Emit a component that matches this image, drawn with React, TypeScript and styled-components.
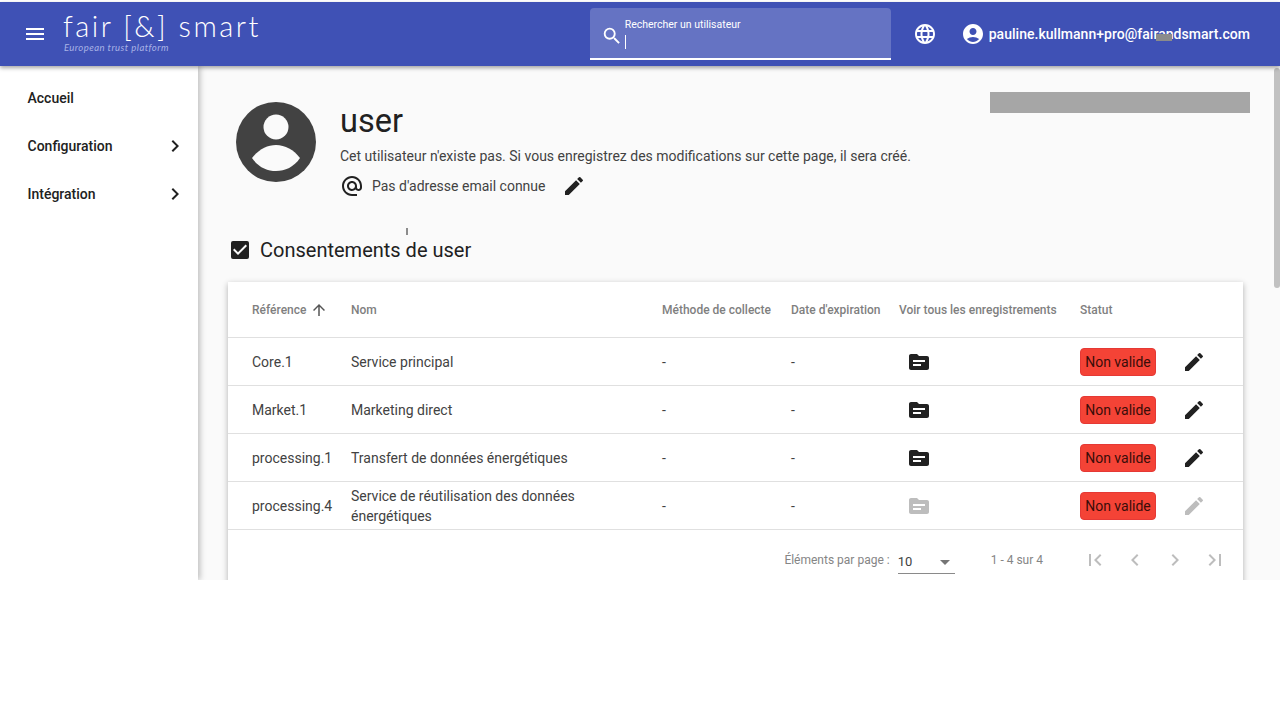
import { FC } from 'react'
import styled, { createGlobalStyle } from 'styled-components'
import {
  MdAccountCircle,
  MdAlternateEmail,
  MdArrowDropDown,
  MdArrowUpward,
  MdCheckBox,
  MdChevronLeft,
  MdChevronRight,
  MdEdit,
  MdFirstPage,
  MdLanguage,
  MdLastPage,
  MdMenu,
  MdSearch,
  MdTopic,
} from 'react-icons/md'

const GlobalStyle = createGlobalStyle`
  html, body {
    margin: 0;
    background: #fff;
    font-family: Roboto, "Liberation Sans", sans-serif;
  }
`

const Page = styled.div`
  position: relative;
  display: flex;
  flex-direction: column;
  height: 578px;
  padding-top: 2px;
  overflow: hidden;
`

const Header = styled.header`
  position: relative;
  z-index: 2;
  flex: none;
  display: flex;
  align-items: center;
  height: 64px;
  padding: 0 30px 0 23px;
  background: #3f51b5;
  color: #fff;
  box-shadow: 0 2px 4px rgba(0, 0, 0, 0.35);
`

const Logo = styled.div`
  display: flex;
  flex-direction: column;
  margin: 0 0 4px 16px;
`

const LogoName = styled.span`
  font-family: Lato, sans-serif;
  font-weight: 300;
  font-size: 29px;
  line-height: 30px;
  letter-spacing: 2.5px;
  white-space: nowrap;
`

const LogoTagline = styled.span`
  font-family: Lato, sans-serif;
  font-style: italic;
  font-size: 9.5px;
  line-height: 12px;
  letter-spacing: 0.45px;
  margin: 1px 0 0 1px;
  color: #a9b3e6;
`

const Search = styled.div`
  display: flex;
  box-sizing: border-box;
  width: 301px;
  height: 52px;
  margin-left: auto;
  margin-right: 22px;
  padding: 0 12px 0 11px;
  background: #6573c3;
  border-bottom: 2px solid #fff;
  border-radius: 4px 4px 0 0;
`

const SearchIcon = styled(MdSearch)`
  flex: none;
  margin: 17px 2px 0 0;
  font-size: 22px;
`

const SearchField = styled.div`
  display: flex;
  flex-direction: column;
  align-items: flex-start;
`

const SearchLabel = styled.span`
  margin-top: 10px;
  font-size: 10.5px;
  line-height: 13px;
  white-space: nowrap;
`

const Caret = styled.span`
  width: 1px;
  height: 14px;
  margin-top: 4px;
  background: #fff;
`

const AccountIcon = styled(MdAccountCircle)`
  flex: none;
  margin-left: 24px;
  font-size: 24px;
`

const UserEmail = styled.span`
  position: relative;
  margin-left: 4px;
  font-size: 14px;
  font-weight: 500;
  letter-spacing: 0.03px;
  white-space: nowrap;
`

const EmailSmudge = styled.span`
  position: absolute;
  left: 167px;
  top: 8px;
  width: 16px;
  height: 7px;
  background: #8b8b8b;
`

const Body = styled.div`
  flex: 1;
  display: flex;
  min-height: 0;
`

const Sidebar = styled.nav`
  position: relative;
  z-index: 1;
  flex: none;
  box-sizing: border-box;
  width: 198px;
  padding: 8px 0 0 27.5px;
  background: #fff;
  box-shadow: 2px 0 6px rgba(0, 0, 0, 0.25);
`

const NavItem = styled.div`
  display: flex;
  align-items: center;
  justify-content: space-between;
  height: 48px;
  padding-right: 11.5px;
  font-size: 14px;
  font-weight: 500;
  color: #212121;
`

const Main = styled.main`
  position: relative;
  flex: 1;
  box-sizing: border-box;
  padding: 36px 37px 0 30px;
  background: #fafafa;
`

const ScrollThumb = styled.div`
  position: absolute;
  right: 0;
  top: 2px;
  width: 6px;
  height: 220px;
  border-radius: 3px;
  background: #c1c1c1;
`

const RedactedBar = styled.div`
  position: absolute;
  right: 30px;
  top: 26px;
  width: 260px;
  height: 21px;
  background: #a6a6a6;
`

const StrayTick = styled.div`
  position: absolute;
  left: 208px;
  top: 162px;
  width: 2px;
  height: 7px;
  background: #8c8c8c;
`

const Profile = styled.section`
  display: flex;
  align-items: flex-start;
  gap: 24px;
  padding-left: 8px;
`

const Avatar = styled.svg`
  flex: none;
  width: 80px;
  height: 80px;
`

const ProfileInfo = styled.div`
  display: flex;
  flex-direction: column;
`

const UserName = styled.h1`
  margin: 1px 0 0;
  font-size: 32.5px;
  font-weight: 400;
  line-height: 36px;
  color: #212121;
`

const Notice = styled.p`
  margin: 7px 0 0;
  font-size: 14px;
  line-height: 20px;
  color: #424242;
`

const EmailRow = styled.div`
  display: flex;
  align-items: center;
  height: 24px;
  margin-top: 8px;
  font-size: 14px;
  color: #424242;
`

const AtIcon = styled(MdAlternateEmail)`
  font-size: 24px;
  margin-right: 8px;
  color: #212121;
`

const EmailEditIcon = styled(MdEdit)`
  font-size: 24px;
  margin-left: 17px;
  color: #212121;
`

const SectionTitle = styled.h2`
  display: flex;
  align-items: center;
  gap: 8px;
  height: 24px;
  margin: 40px 0 0;
  font-size: 20px;
  font-weight: 400;
  color: #212121;
`

const Card = styled.section`
  margin-top: 20px;
  background: #fff;
  box-shadow: 0 2px 6px rgba(0, 0, 0, 0.3);
`

const Table = styled.table`
  width: 100%;
  table-layout: fixed;
  border-collapse: collapse;
`

const HeadCell = styled.th<{ $width?: number }>`
  ${({ $width }) => $width && `width: ${$width}px;`}
  box-sizing: border-box;
  height: 55px;
  padding: 1px 0 0;
  text-align: left;
  font-size: 12px;
  font-weight: 500;
  color: #7f7f7f;
  white-space: nowrap;
  border-bottom: 1px solid #e0e0e0;
  &:first-child {
    padding-left: 24px;
  }
`

const SortIcon = styled(MdArrowUpward)`
  margin-left: 4px;
  font-size: 18px;
  vertical-align: -5px;
  color: #555;
`

const Row = styled.tr`
  height: 48px;
`

const Cell = styled.td`
  box-sizing: border-box;
  padding: 2px 0 0;
  font-size: 14px;
  line-height: 20px;
  color: #424242;
  border-bottom: 1px solid #e0e0e0;
  &:first-child {
    padding-left: 24px;
  }
`

const NameCell = styled(Cell)`
  padding-right: 30px;
`

const IconCell = styled(Cell)`
  padding-left: 8px;
`

const RowIcon = styled.span<{ $disabled?: boolean }>`
  display: flex;
  font-size: 24px;
  color: ${({ $disabled }) => ($disabled ? '#bdbdbd' : '#212121')};
`

const StatusCell = styled.div`
  display: flex;
  align-items: center;
  gap: 26px;
`

const StatusBadge = styled.span`
  box-sizing: border-box;
  width: 76px;
  height: 28px;
  border: 1px solid #e53935;
  border-radius: 4px;
  background: #f44336;
  text-align: center;
  font-size: 14px;
  line-height: 26px;
  color: #3a0d09;
`

const Paginator = styled.div`
  display: flex;
  align-items: center;
  justify-content: flex-end;
  height: 57px;
  padding: 2px 8px 0 0;
  font-size: 12px;
  color: #858585;
`

const PageSize = styled.div`
  position: relative;
  top: 2px;
  display: flex;
  align-items: center;
  justify-content: space-between;
  box-sizing: border-box;
  width: 57px;
  height: 24px;
  margin-left: 8px;
  font-size: 13px;
  color: #424242;
  border-bottom: 1px solid #8a8a8a;
`

const DropIcon = styled(MdArrowDropDown)`
  margin-right: -2px;
  font-size: 24px;
  color: #757575;
`

const RangeLabel = styled.span`
  margin: 0 32px 0 36px;
`

const PageButton = styled.span`
  display: flex;
  align-items: center;
  justify-content: center;
  width: 40px;
  height: 40px;
  font-size: 24px;
  color: #bdbdbd;
`

interface Consent {
  reference: string
  name: string
  disabled?: boolean
}

const consents: Consent[] = [
  { reference: 'Core.1', name: 'Service principal' },
  { reference: 'Market.1', name: 'Marketing direct' },
  { reference: 'processing.1', name: 'Transfert de données énergétiques' },
  { reference: 'processing.4', name: 'Service de réutilisation des données énergétiques', disabled: true },
]

const App: FC = () => {
  return (
    <>
      <GlobalStyle />
      <Page>
        <Header>
          <MdMenu size={24} />
          <Logo>
            <LogoName>fair [&amp;] smart</LogoName>
            <LogoTagline>European trust platform</LogoTagline>
          </Logo>
          <Search>
            <SearchIcon />
            <SearchField>
              <SearchLabel>Rechercher un utilisateur</SearchLabel>
              <Caret />
            </SearchField>
          </Search>
          <MdLanguage size={24} />
          <AccountIcon />
          <UserEmail>
            pauline.kullmann+pro@fairandsmart.com
            <EmailSmudge />
          </UserEmail>
        </Header>
        <Body>
          <Sidebar>
            <NavItem>Accueil</NavItem>
            <NavItem>
              Configuration
              <MdChevronRight size={24} />
            </NavItem>
            <NavItem>
              Intégration
              <MdChevronRight size={24} />
            </NavItem>
          </Sidebar>
          <Main>
            <ScrollThumb />
            <RedactedBar />
            <StrayTick />
            <Profile>
              <Avatar viewBox="0 0 80 80">
                <circle cx="40" cy="40" r="40" fill="#424242" />
                <circle cx="40" cy="25" r="12.5" fill="#fafafa" />
                <path d="M16 56 C22 48 31 43 40 43 C49 43 58 48 64 56 C58 65 49 69 40 69 C31 69 22 65 16 56 Z" fill="#fafafa" />
              </Avatar>
              <ProfileInfo>
                <UserName>user</UserName>
                <Notice>Cet utilisateur n'existe pas. Si vous enregistrez des modifications sur cette page, il sera créé.</Notice>
                <EmailRow>
                  <AtIcon />
                  Pas d'adresse email connue
                  <EmailEditIcon />
                </EmailRow>
              </ProfileInfo>
            </Profile>
            <SectionTitle>
              <MdCheckBox size={24} color="#212121" />
              Consentements de user
            </SectionTitle>
            <Card>
              <Table>
                <thead>
                  <tr>
                    <HeadCell $width={123}>
                      Référence
                      <SortIcon />
                    </HeadCell>
                    <HeadCell $width={311}>Nom</HeadCell>
                    <HeadCell $width={129}>Méthode de collecte</HeadCell>
                    <HeadCell $width={108}>Date d'expiration</HeadCell>
                    <HeadCell $width={181}>Voir tous les enregistrements</HeadCell>
                    <HeadCell>Statut</HeadCell>
                  </tr>
                </thead>
                <tbody>
                  {consents.map((consent) => (
                    <Row key={consent.reference}>
                      <Cell>{consent.reference}</Cell>
                      <NameCell>{consent.name}</NameCell>
                      <Cell>-</Cell>
                      <Cell>-</Cell>
                      <IconCell>
                        <RowIcon $disabled={consent.disabled}>
                          <MdTopic />
                        </RowIcon>
                      </IconCell>
                      <Cell>
                        <StatusCell>
                          <StatusBadge>Non valide</StatusBadge>
                          <RowIcon $disabled={consent.disabled}>
                            <MdEdit />
                          </RowIcon>
                        </StatusCell>
                      </Cell>
                    </Row>
                  ))}
                </tbody>
              </Table>
              <Paginator>
                Éléments par page :
                <PageSize>
                  10
                  <DropIcon />
                </PageSize>
                <RangeLabel>1 - 4 sur 4</RangeLabel>
                <PageButton>
                  <MdFirstPage />
                </PageButton>
                <PageButton>
                  <MdChevronLeft />
                </PageButton>
                <PageButton>
                  <MdChevronRight />
                </PageButton>
                <PageButton>
                  <MdLastPage />
                </PageButton>
              </Paginator>
            </Card>
          </Main>
        </Body>
      </Page>
    </>
  )
}

export default App
